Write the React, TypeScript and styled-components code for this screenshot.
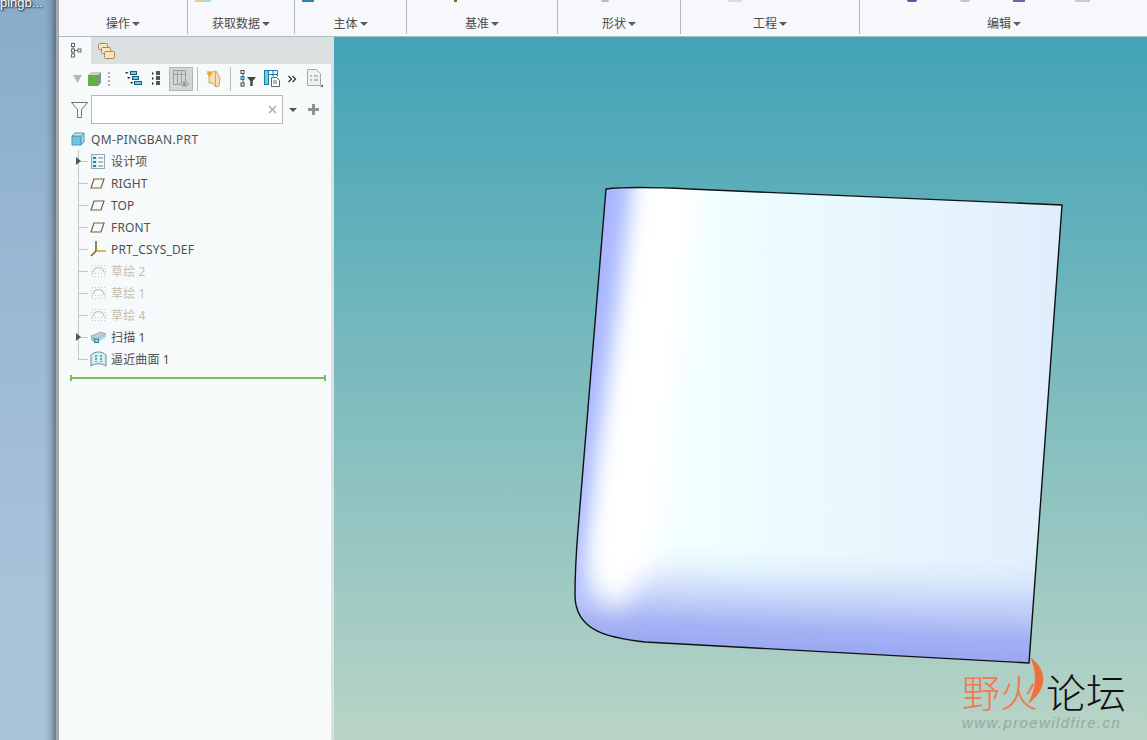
import React from "react";
import styled, { createGlobalStyle } from "styled-components";

const GlobalStyle = createGlobalStyle`
  html, body {
    margin: 0;
    padding: 0;
    overflow: hidden;
    background: #a6c0d8;
  }
`;

const FONT = `"Noto Sans", "Noto Sans CJK SC", sans-serif`;

const Page = styled.div`
  width: 1147px;
  height: 740px;
  display: flex;
  overflow: hidden;
  font-family: ${FONT};
`;

const Desktop = styled.div`
  width: 56px;
  flex: none;
  overflow: hidden;
  background:
    linear-gradient(90deg, transparent 0%, transparent 80%, rgba(90, 105, 125, 0.25) 90%, rgba(70, 85, 100, 0.65) 100%),
    linear-gradient(180deg, #88acca 0%, #96b6d1 30%, #a9c2da 80%, #a9c2da 100%);
`;

const DesktopLabel = styled.div`
  margin-top: -4px;
  font-family: "Liberation Sans", sans-serif;
  font-size: 13px;
  line-height: 14px;
  color: #fff;
  white-space: nowrap;
  text-shadow: 0 0 2px #223, 1px 1px 2px #223;
`;

const WindowEdge = styled.div`
  width: 3px;
  flex: none;
  background: #a9a9a9;
`;

const Main = styled.div`
  flex: 1;
  min-width: 0;
  display: flex;
  flex-direction: column;
`;

const Ribbon = styled.div`
  height: 36px;
  flex: none;
  display: flex;
  background: #f7f8fb;
  border-bottom: 1px solid #a9bebe;
`;

const RibbonGroup = styled.div<{ $w: number; $last?: boolean }>`
  width: ${(p) => p.$w}px;
  flex: none;
  height: 34px;
  box-sizing: border-box;
  display: flex;
  flex-direction: column;
  border-right: ${(p) => (p.$last ? "none" : "1px solid #b4b6b8")};
`;

const StubRow = styled.div`
  height: 16px;
  position: relative;
  overflow: hidden;
`;

const Stub = styled.span<{ $x: number; $w: number; $c: string; $round?: boolean }>`
  position: absolute;
  top: 0;
  left: ${(p) => p.$x}px;
  width: ${(p) => p.$w}px;
  height: 2px;
  background: ${(p) => p.$c};
  border-radius: ${(p) => (p.$round ? "0 0 5px 5px" : "0")};
`;

const GroupLabel = styled.div`
  display: flex;
  justify-content: center;
  align-items: center;
  gap: 2px;
  height: 16px;
  font-size: 12px;
  line-height: 16px;
  color: #4a4a4a;
`;

const Caret = styled.span`
  width: 0;
  height: 0;
  border-left: 4px solid transparent;
  border-right: 4px solid transparent;
  border-top: 4px solid #5c5c5c;
`;

const Body = styled.div`
  flex: 1;
  min-height: 0;
  display: flex;
`;

const Sidebar = styled.div`
  width: 275px;
  flex: none;
  display: flex;
  flex-direction: column;
  background: #dbe1e1;
`;

const TabBar = styled.div`
  height: 27px;
  flex: none;
  display: flex;
  align-items: stretch;
`;

const Tab = styled.div<{ $active?: boolean }>`
  width: 32px;
  box-sizing: border-box;
  display: flex;
  align-items: center;
  justify-content: center;
  padding: ${(p) => (p.$active ? "0 0 0 3px" : "0 2px 0 0")};
  background: ${(p) => (p.$active ? "#f6fafb" : "transparent")};
`;

const Panel = styled.div`
  flex: 1;
  margin-right: 3px;
  display: flex;
  flex-direction: column;
  background: #f6fafb;
`;

const Toolbar = styled.div`
  height: 29px;
  flex: none;
  margin-bottom: 2px;
  display: flex;
  align-items: center;
  padding-left: 14px;
`;

const ToolIcon = styled.span<{ $ml?: number }>`
  display: flex;
  flex: none;
  margin-left: ${(p) => p.$ml ?? 0}px;
`;

const ToggleButton = styled.span<{ $ml?: number }>`
  width: 24px;
  height: 24px;
  box-sizing: border-box;
  flex: none;
  display: flex;
  align-items: center;
  justify-content: center;
  margin-left: ${(p) => p.$ml ?? 0}px;
  background: #d3d6d6;
  border: 1px solid #b3b6b6;
`;

const ToolSep = styled.span<{ $ml: number }>`
  width: 1px;
  height: 24px;
  flex: none;
  margin-left: ${(p) => p.$ml}px;
  background: #b9bdbd;
`;

const SearchRow = styled.div`
  height: 29px;
  flex: none;
  display: flex;
  align-items: center;
  padding-left: 12px;
`;

const SearchBox = styled.div`
  width: 192px;
  height: 29px;
  box-sizing: border-box;
  margin-left: 3px;
  display: flex;
  align-items: center;
  justify-content: flex-end;
  padding-right: 5px;
  background: #fff;
  border: 1px solid #b3b8b8;
`;

const SearchCaret = styled(Caret)`
  margin-left: 6px;
  border-top-color: #555;
`;

const TreeTitle = styled.div`
  display: flex;
  align-items: center;
  height: 22px;
  margin-top: 4px;
  padding-left: 12px;
  gap: 6px;
  font-size: 12px;
  letter-spacing: 0.35px;
  color: #505050;
`;

const Tree = styled.div`
  display: flex;
  flex-direction: column;
  padding-left: 19px;
`;

const TreeRow = styled.div<{ $muted?: boolean }>`
  display: flex;
  align-items: center;
  height: 22px;
  font-size: 12px;
  letter-spacing: 0.15px;
  white-space: nowrap;
  color: ${(p) => (p.$muted ? "#c4beb0" : "#505050")};
`;

const Gutter = styled.span<{ $last?: boolean }>`
  position: relative;
  width: 11px;
  height: 22px;
  flex: none;
  &::before {
    content: "";
    position: absolute;
    left: 0;
    top: 0;
    width: 1px;
    height: ${(p) => (p.$last ? "11px" : "22px")};
    background: #c2c6c6;
  }
  &::after {
    content: "";
    position: absolute;
    left: 0;
    top: 11px;
    width: 10px;
    height: 1px;
    background: #c2c6c6;
  }
`;

const Expander = styled.span`
  position: absolute;
  z-index: 1;
  left: -2px;
  top: 7px;
  width: 0;
  height: 0;
  border-top: 4px solid transparent;
  border-bottom: 4px solid transparent;
  border-left: 5px solid #555;
`;

const RowIcon = styled.span`
  width: 18px;
  height: 18px;
  flex: none;
  margin-right: 4px;
  display: flex;
  align-items: center;
  justify-content: center;
`;

const InsertLine = styled.div`
  position: relative;
  height: 2px;
  margin: 7px 5px 0 11px;
  background: #7cbd5e;
  &::before,
  &::after {
    content: "";
    position: absolute;
    top: -2px;
    width: 2px;
    height: 6px;
    background: #7cbd5e;
  }
  &::before {
    left: 0;
  }
  &::after {
    right: 0;
  }
`;

const Viewport = styled.div`
  position: relative;
  flex: 1;
  min-width: 0;
  background: linear-gradient(180deg, #42a3b6 0%, #b9d4c6 100%);
  overflow: hidden;
`;

const Canvas = styled.svg`
  display: block;
`;

const Watermark = styled.div`
  position: absolute;
  left: 628px;
  top: 633px;
  width: 175px;
`;

const MarkTitle = styled.div`
  display: flex;
  align-items: center;
  height: 45px;
  line-height: 45px;
  font-weight: 300;
`;

const MarkFire = styled.span`
  font-size: 38px;
  color: #ee7a52;
`;

const MarkInk = styled.span`
  margin-left: 8px;
  font-size: 40px;
  color: #111;
`;

const MarkUrl = styled.div`
  font-family: "Liberation Sans", sans-serif;
  font-style: italic;
  font-size: 15px;
  line-height: 16px;
  letter-spacing: 1.4px;
  white-space: nowrap;
  color: #9aa7a3;
`;

const MarkFlame = styled.svg`
  position: absolute;
  left: 63px;
  top: -13px;
`;

const SURFACE =
  "M606 189 C622 187 650 187 690 189 L1062 205 L1029 663 L645 642 C610 638 575 632 575 595 C575 575 576 555 578 530 Z";

const CubeIcon = () => (
  <svg width="15" height="16" viewBox="0 0 15 16">
    <path d="M1 4h10v11H1z" fill="#62b044" />
    <path d="M1 4l3-3h10l-3 3z" fill="#c9cfcf" />
    <path d="M11 4l3-3v11l-3 3z" fill="#8a9191" />
  </svg>
);

const Dots = () => (
  <svg width="3" height="16" viewBox="0 0 3 16">
    {[1, 5, 9, 13].map((y) => (
      <rect key={y} x="0" y={y} width="2" height="2" fill="#a9adad" />
    ))}
  </svg>
);

const TreeLevelsIcon = () => (
  <svg width="17" height="15" viewBox="0 0 17 15" fill="#7cc6e2" stroke="#17607f">
    <rect x="5.5" y="0.5" width="6" height="3" />
    <rect x="7.5" y="5.5" width="6" height="3" />
    <rect x="9.5" y="10.5" width="7" height="3" />
    <path d="M0 1h3.5L1.7 3zM2 6h3.5L3.7 8zM5 11h3.5L6.7 13z" fill="#333" stroke="none" />
  </svg>
);

const NodeListIcon = () => (
  <svg width="9" height="15" viewBox="0 0 9 15">
    <path d="M0 1l2 1.5L0 4zM0 6l2 1.5L0 9zM0 11l2 1.5L0 14z" fill="#333" />
    <rect x="4" y="0" width="4" height="4" fill="#555" />
    <rect x="4" y="5" width="4" height="4" fill="#555" />
    <rect x="4" y="10" width="4" height="4" fill="#555" />
  </svg>
);

const TableEyeIcon = () => (
  <svg width="20" height="20" viewBox="0 0 20 20" fill="none" stroke="#9a9d9d">
    <path d="M2.5 1.5h12v14h-12zM2.5 5.5h12M6.5 1.5v14M10.5 1.5v14" />
    <path d="M9 15c2-3 7-3 9 0c-2 3-7 3-9 0z" fill="#c8caca" />
    <circle cx="13.5" cy="15" r="1.5" fill="#888" stroke="none" />
  </svg>
);

const FolderStarIcon = () => (
  <svg width="15" height="18" viewBox="0 0 15 18">
    <path d="M3 3l7-2 4 7-1 8-3 1-4-4H3z" fill="#f6dfae" stroke="#c9a868" />
    <path d="M9.5 2v15" stroke="#c9a868" />
    <path
      d="M3.5 0l.8 1.8L6.2 1 5.3 2.9 7 4l-1.9.4L5 6.4 3.5 5.1 2 6.4l-.1-2L0 4l1.7-1.1L.8 1l1.9.8z"
      fill="#f5a623"
    />
  </svg>
);

const TreeFilterIcon = () => (
  <svg width="17" height="17" viewBox="0 0 17 17">
    <path d="M3 4v9" stroke="#1f7aa0" />
    <rect x="1" y="0.5" width="3" height="3" fill="#fff" stroke="#444" />
    <rect x="1" y="6.5" width="3" height="3" fill="#7cc6e2" stroke="#1f7aa0" />
    <rect x="1" y="13" width="3" height="3" fill="#fff" stroke="#444" />
    <path d="M7 7h9l-3.3 4v5h-2.4v-5z" fill="#444" />
  </svg>
);

const TableDocIcon = () => (
  <svg width="16" height="17" viewBox="0 0 16 17">
    <rect x="0.5" y="0.5" width="4" height="14" fill="#7cc6e2" stroke="#1f7aa0" />
    <path d="M4.5 0.5h9v6M4.5 4.5h9M9 0.5v6" fill="none" stroke="#1f7aa0" />
    <path d="M7.5 7.5h5l3 3v6h-8z" fill="#fff" stroke="#666" />
    <path d="M9 11h4M9 13h4" stroke="#777" />
  </svg>
);

const ChevronsIcon = () => (
  <svg width="9" height="8" viewBox="0 0 9 8" fill="none" stroke="#333" strokeWidth="1.3">
    <path d="M0.5 1l3 3-3 3M4.5 1l3 3-3 3" />
  </svg>
);

const DocListIcon = () => (
  <svg width="17" height="19" viewBox="0 0 17 19">
    <path d="M0.5 0.5h9l4 4v12h-13z" fill="#eff1f1" stroke="#a5a9a9" />
    <path d="M3 7h2M7 7h4M3 11h2M7 11h4" stroke="#8b8f8f" />
    <path d="M16 15v3h-3z" fill="#666" />
  </svg>
);

const TreeTabIcon = () => (
  <svg width="11" height="15" viewBox="0 0 11 15" fill="#fff" stroke="#666">
    <path d="M2 3v10M2 7.5h5" />
    <rect x="0.5" y="0.5" width="3" height="3" />
    <rect x="0.5" y="6" width="3" height="3" />
    <rect x="7" y="6" width="3" height="3" />
    <rect x="0.5" y="11" width="3" height="3" />
  </svg>
);

const FoldersIcon = () => (
  <svg width="17" height="17" viewBox="0 0 17 17" fill="#f6e4bd" stroke="#a98a52">
    <rect x="0.5" y="1.5" width="9" height="6" rx="1" />
    <rect x="3.5" y="5.5" width="9" height="6" rx="1" />
    <rect x="6.5" y="9.5" width="10" height="7" rx="1" />
  </svg>
);

const FunnelIcon = () => (
  <svg width="17" height="16" viewBox="0 0 17 16" fill="#f6fafb" stroke="#707474">
    <path d="M0.5 0.5h16l-6 7v8h-4v-8z" />
  </svg>
);

const ClearIcon = () => (
  <svg width="9" height="9" viewBox="0 0 9 9" stroke="#a2a6a6" strokeWidth="1.3">
    <path d="M1 1l7 7M8 1l-7 7" />
  </svg>
);

const PlusIcon = () => (
  <ToolIcon $ml={11}>
    <svg width="11" height="11" viewBox="0 0 11 11">
      <path d="M4 0h3v4h4v3H7v4H4V7H0V4h4z" fill="#8e9292" />
    </svg>
  </ToolIcon>
);

const PartIcon = () => (
  <svg width="14" height="14" viewBox="0 0 14 14">
    <path d="M1 4h9v9H1z" fill="#6fc6e0" stroke="#4a9ab6" strokeLinejoin="round" />
    <path d="M1 4l3-3h9l-3 3z" fill="#c8eaf4" stroke="#4a9ab6" strokeLinejoin="round" />
    <path d="M10 4l3-3v9l-3 3z" fill="#a6dcec" stroke="#4a9ab6" strokeLinejoin="round" />
  </svg>
);

const DesignItemsIcon = () => (
  <svg width="14" height="15" viewBox="0 0 14 15">
    <rect x="0.5" y="0.5" width="13" height="14" fill="#f7fcfe" stroke="#93a8b0" />
    <rect x="1" y="1" width="5" height="13" fill="#d6eef6" />
    <path d="M2 3h3v2H2zM2 7h3v2H2zM2 11h3v2H2z" fill="#2d86a6" />
    <path d="M7 4h5M7 8h5M7 12h5" stroke="#777" />
  </svg>
);

const PlaneIcon = () => (
  <svg width="17" height="11" viewBox="0 0 17 11" fill="#f6fafb" stroke="#7a623c" strokeWidth="1.2">
    <path d="M4 1h10l-3 9H1z" />
  </svg>
);

const CsysIcon = () => (
  <svg width="17" height="16" viewBox="0 0 17 16" fill="none" strokeWidth="1.5">
    <path d="M6 0v10" stroke="#6e5a30" />
    <path d="M6 10h10" stroke="#d39a2a" />
    <path d="M6 10l-5 5" stroke="#8a5a20" />
  </svg>
);

const SketchIcon = () => (
  <svg width="15" height="12" viewBox="0 0 15 12" fill="none" stroke="#c8c8c0">
    <path d="M2 7.5C3 1 12 1 13 7.5" strokeWidth="1.3" />
    <path d="M1 0.5h13M0.5 3v9M14.5 3v9M1 8.5h13M1 11.5h13" strokeDasharray="1 2" />
  </svg>
);

const SweepIcon = () => (
  <svg width="17" height="13" viewBox="0 0 17 13">
    <path d="M1 5l10-4 5 2-10 5z" fill="#c4ced2" stroke="#8a979b" strokeWidth="0.7" />
    <path d="M6 8l10-5v3L6 12z" fill="#9fd6ea" />
    <path d="M1 5l5 3v4l-5-3z" fill="#aab6ba" />
    <rect x="4.5" y="8" width="4" height="3.5" fill="none" stroke="#2d86a6" />
  </svg>
);

const SurfaceIcon = () => (
  <svg width="17" height="16" viewBox="0 0 17 16" stroke="#6a8a96">
    <path d="M1 4c4-4 11-4 15 0v11c-4-3-11-3-15 0z" fill="#d3eff8" />
    <path d="M6 4v7M11 4v7" stroke="#164f68" strokeDasharray="2 1" />
  </svg>
);

const groups = [
  { label: "操作", w: 129, stubs: [] },
  { label: "获取数据", w: 107, stubs: [{ x: 7, w: 9, c: "#e3cf9c" }, { x: 16, w: 7, c: "#9fdcec" }] },
  { label: "主体", w: 112, stubs: [{ x: 7, w: 12, c: "#2d86a6" }] },
  { label: "基准", w: 151, stubs: [{ x: 47, w: 3, c: "#8a6420" }] },
  { label: "形状", w: 123, stubs: [{ x: 43, w: 8, c: "#b9bcbc", round: true }] },
  { label: "工程", w: 179, stubs: [{ x: 47, w: 14, c: "#d9dcdc" }] },
  {
    label: "编辑",
    w: 288,
    stubs: [
      { x: 47, w: 10, c: "#6f4f9c", round: true },
      { x: 100, w: 10, c: "#c4c6c6", round: true },
      { x: 153, w: 12, c: "#7d5fa8" },
      { x: 215, w: 15, c: "#c9cbcb" },
    ],
  },
];

type Item = {
  label: string;
  icon: React.ReactNode;
  muted?: boolean;
  expand?: boolean;
};

const items: Item[] = [
  { label: "设计项", icon: <DesignItemsIcon />, expand: true },
  { label: "RIGHT", icon: <PlaneIcon /> },
  { label: "TOP", icon: <PlaneIcon /> },
  { label: "FRONT", icon: <PlaneIcon /> },
  { label: "PRT_CSYS_DEF", icon: <CsysIcon /> },
  { label: "草绘 2", icon: <SketchIcon />, muted: true },
  { label: "草绘 1", icon: <SketchIcon />, muted: true },
  { label: "草绘 4", icon: <SketchIcon />, muted: true },
  { label: "扫描 1", icon: <SweepIcon />, expand: true },
  { label: "逼近曲面 1", icon: <SurfaceIcon /> },
];

export default function App() {
  return (
    <Page>
      <GlobalStyle />
      <Desktop>
        <DesktopLabel>pingb...</DesktopLabel>
      </Desktop>
      <WindowEdge />
      <Main>
        <Ribbon>
          {groups.map((g, i) => (
            <RibbonGroup key={g.label} $w={g.w} $last={i === groups.length - 1}>
              <StubRow>
                {g.stubs.map((s) => (
                  <Stub key={s.x} $x={s.x} $w={s.w} $c={s.c} $round={"round" in s} />
                ))}
              </StubRow>
              <GroupLabel>
                {g.label}
                <Caret />
              </GroupLabel>
            </RibbonGroup>
          ))}
        </Ribbon>
        <Body>
          <Sidebar>
            <TabBar>
              <Tab $active>
                <TreeTabIcon />
              </Tab>
              <Tab>
                <FoldersIcon />
              </Tab>
            </TabBar>
            <Panel>
              <Toolbar>
                <ToolIcon>
                  <svg width="9" height="8" viewBox="0 0 9 8">
                    <path d="M0 0h9L4.5 8z" fill="#b5b9b9" />
                  </svg>
                </ToolIcon>
                <ToolIcon $ml={5}>
                  <CubeIcon />
                </ToolIcon>
                <ToolIcon $ml={6}>
                  <Dots />
                </ToolIcon>
                <ToolIcon $ml={14}>
                  <TreeLevelsIcon />
                </ToolIcon>
                <ToolIcon $ml={10}>
                  <NodeListIcon />
                </ToolIcon>
                <ToggleButton $ml={8}>
                  <TableEyeIcon />
                </ToggleButton>
                <ToolSep $ml={4} />
                <ToolIcon $ml={8}>
                  <FolderStarIcon />
                </ToolIcon>
                <ToolSep $ml={9} />
                <ToolIcon $ml={9}>
                  <TreeFilterIcon />
                </ToolIcon>
                <ToolIcon $ml={7}>
                  <TableDocIcon />
                </ToolIcon>
                <ToolIcon $ml={8}>
                  <ChevronsIcon />
                </ToolIcon>
                <ToolIcon $ml={10}>
                  <DocListIcon />
                </ToolIcon>
              </Toolbar>
              <SearchRow>
                <FunnelIcon />
                <SearchBox>
                  <ClearIcon />
                </SearchBox>
                <SearchCaret />
                <PlusIcon />
              </SearchRow>
              <TreeTitle>
                <PartIcon />
                QM-PINGBAN.PRT
              </TreeTitle>
              <Tree>
                {items.map((it, i) => (
                  <TreeRow key={it.label} $muted={it.muted}>
                    <Gutter $last={i === items.length - 1}>{it.expand && <Expander />}</Gutter>
                    <RowIcon>{it.icon}</RowIcon>
                    {it.label}
                  </TreeRow>
                ))}
              </Tree>
              <InsertLine />
            </Panel>
          </Sidebar>
          <Viewport>
            <Canvas width="813" height="703" viewBox="334 37 813 703">
              <defs>
                <clipPath id="surface-clip">
                  <path d={SURFACE} />
                </clipPath>
                <linearGradient id="base" x1="650" y1="0" x2="1060" y2="0" gradientUnits="userSpaceOnUse">
                  <stop offset="0" stopColor="#f4ffff" />
                  <stop offset="0.2" stopColor="#eefeff" />
                  <stop offset="1" stopColor="#e0eefc" />
                </linearGradient>
                <linearGradient id="bottom" x1="822" y1="552" x2="817" y2="655" gradientUnits="userSpaceOnUse">
                  <stop offset="0" stopColor="#98a6f2" stopOpacity="0" />
                  <stop offset="0.2" stopColor="#98a6f2" stopOpacity="0.12" />
                  <stop offset="0.47" stopColor="#98a6f2" stopOpacity="0.45" />
                  <stop offset="0.75" stopColor="#98a6f2" stopOpacity="0.85" />
                  <stop offset="1" stopColor="#98a6f2" />
                </linearGradient>
                <filter id="blur-wide" x="-50%" y="-50%" width="200%" height="200%">
                  <feGaussianBlur stdDeviation="12" />
                </filter>
                <filter id="blur-side" x="-100%" y="-20%" width="300%" height="140%">
                  <feGaussianBlur stdDeviation="10" />
                </filter>
              </defs>
              <g clipPath="url(#surface-clip)">
                <rect x="560" y="170" width="520" height="510" fill="url(#base)" />
                <rect x="560" y="170" width="520" height="510" fill="url(#bottom)" />
                <path d="M640 150 L705 150 L670 450 L655 560 L612 614 L590 570 Z" fill="#fff" filter="url(#blur-wide)" />
                <path d="M570 150 L636 150 L618 300 L597 450 L585 550 L578 606 L555 606 L560 400 Z" fill="#a9b6ff" filter="url(#blur-side)" />
              </g>
              <path d={SURFACE} fill="none" stroke="#111" strokeWidth="1.4" />
            </Canvas>
            <Watermark>
              <MarkTitle>
                <MarkFire>野火</MarkFire>
                <MarkInk>论坛</MarkInk>
              </MarkTitle>
              <MarkFlame width="20" height="48" viewBox="0 0 20 48">
                <path d="M5 0C14 6 20 16 18 26C16 36 9 42 3 47C7 38 10 30 10 22C10 14 8 6 5 0z" fill="#f0703c" />
              </MarkFlame>
              <MarkUrl>www.proewildfire.cn</MarkUrl>
            </Watermark>
          </Viewport>
        </Body>
      </Main>
    </Page>
  );
}
